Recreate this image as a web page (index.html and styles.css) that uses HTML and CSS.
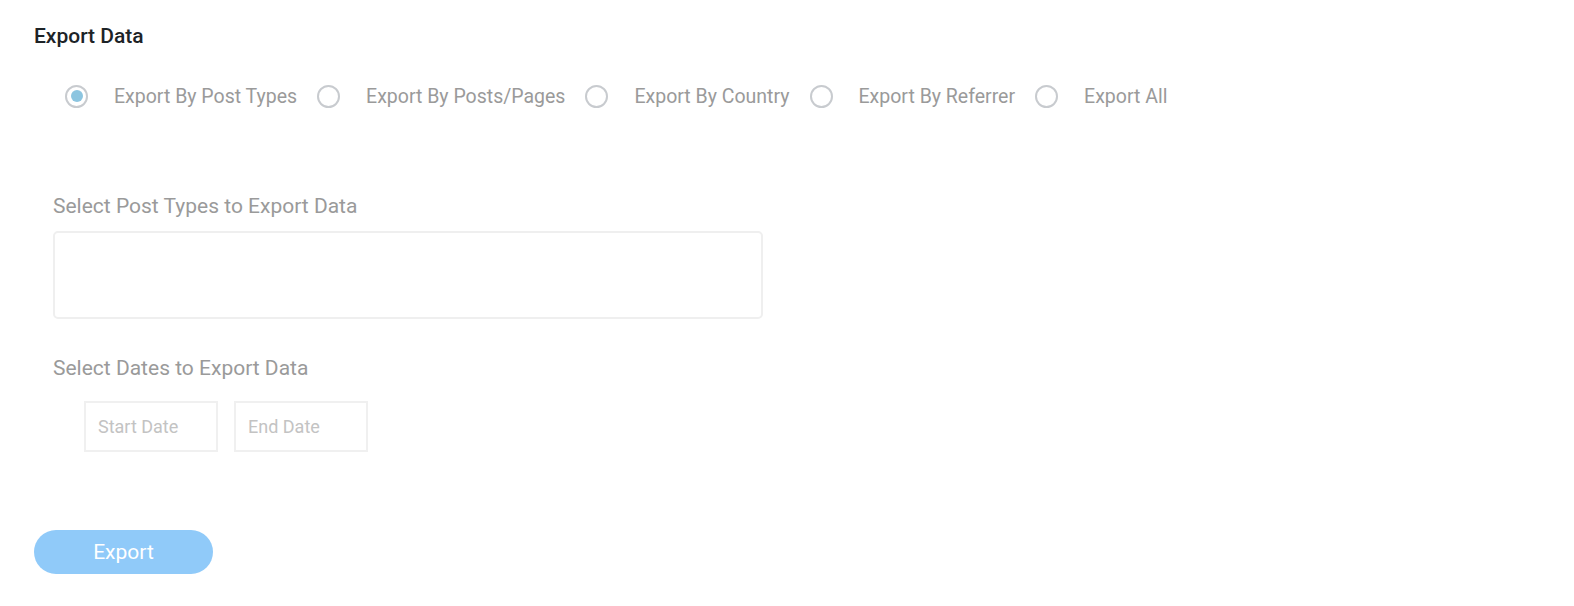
FILE: index.html
```html
<!DOCTYPE html>
<html>
<head>
<meta charset="utf-8">
<link rel="stylesheet" href="styles.css">
</head>
<body>
<div class="page">
  <h2 class="title">Export Data</h2>
  <div class="radios">
    <label class="radio checked"><span class="circle"></span><span class="rlabel">Export By Post Types</span></label>
    <label class="radio"><span class="circle"></span><span class="rlabel">Export By Posts/Pages</span></label>
    <label class="radio"><span class="circle"></span><span class="rlabel">Export By Country</span></label>
    <label class="radio"><span class="circle"></span><span class="rlabel">Export By Referrer</span></label>
    <label class="radio"><span class="circle"></span><span class="rlabel">Export All</span></label>
  </div>
  <div class="section">
    <div class="label">Select Post Types to Export Data</div>
    <div class="selectbox"></div>
    <div class="label dates-label">Select Dates to Export Data</div>
    <div class="dates">
      <div class="date">Start Date</div>
      <div class="date">End Date</div>
    </div>
  </div>
  <button class="btn">Export</button>
</div>
</body>
</html>
```
FILE: styles.css
```css
* { box-sizing: border-box; }
html, body { margin: 0; padding: 0; background: #fff; }
body { font-family: Roboto, "Liberation Sans", sans-serif; }
.page { padding: 24px 34px 0 34px; }
.title { margin: 0; font-size: 21px; font-weight: 500; color: #1d2327; line-height: 24px; }
.radios { display: flex; align-items: center; margin-top: 34px; padding-left: 31px; height: 28px; }
.radio { display: flex; align-items: center; margin-right: 20px; }
.circle { width: 23px; height: 23px; border: 2px solid #c8cbcf; border-radius: 50%; display: flex; align-items: center; justify-content: center; }
.radio.checked .circle::after { content: ""; width: 12px; height: 12px; border-radius: 50%; background: #8cc5e0; }
.rlabel { margin-left: 26px; font-size: 19.5px; color: #9a9a9a; }
.section { padding-left: 19px; margin-top: 84px; }
.label { font-size: 21px; color: #9a9a9a; line-height: 24px; }
.selectbox { margin-top: 13px; width: 710px; height: 88px; border: 2px solid #efefef; border-radius: 5px; }
.dates-label { margin-top: 37px; }
.dates { display: flex; gap: 16px; padding-left: 31px; margin-top: 21px; }
.date { width: 134px; height: 51px; border: 2px solid #f0f0f0; font-size: 18px; color: #c3c3c3; padding-left: 12px; display: flex; align-items: center; }
.btn { margin-top: 78px; width: 179px; height: 44px; border: none; border-radius: 22px; background: #90caf9; color: #fff; font-family: Roboto, sans-serif; font-size: 21px; font-weight: 400; }
```
